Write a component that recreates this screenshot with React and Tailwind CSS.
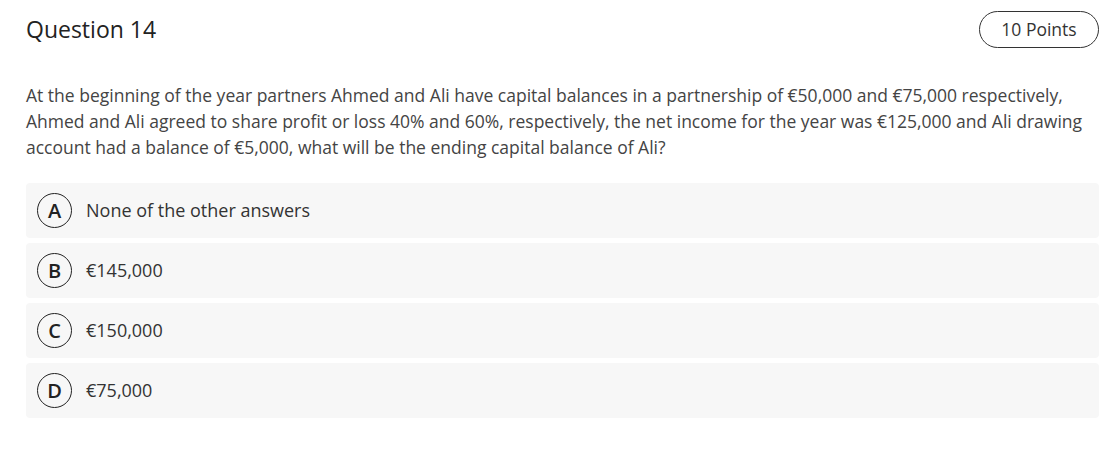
import React from "react";

const answers = [
    { key: "A", text: "None of the other answers" },
    { key: "B", text: "€145,000" },
    { key: "C", text: "€150,000" },
    { key: "D", text: "€75,000" },
];

const Answer = ({ letter, text }) => (
    <div className="h-[55px] rounded bg-[#f7f7f7] flex items-center pl-[11px]">
        <span className="w-[35px] h-[35px] rounded-full border-[1.5px] border-[#222] flex items-center justify-center text-[20px] font-semibold text-[#222] leading-none">
            {letter}
        </span>
        <span className="ml-[14px] text-[18px] text-[#333]">{text}</span>
    </div>
);

const App = () => {
    return (
        <div className="w-[1111px] h-[449px] bg-white pl-[26px] pr-[12px] pt-[11px] font-['Open_Sans',sans-serif]">
            <header className="flex items-center justify-between">
                <h1 className="text-[23px] text-[#222]">Question 14</h1>
                <span className="h-[37px] w-[120px] rounded-full border border-[#333] flex items-center justify-center text-[17.5px] text-[#333]">
                    10 Points
                </span>
            </header>
            <p className="mt-[34px] text-[17.5px] leading-[26px] text-[#444]">
                At the beginning of the year partners Ahmed and Ali have capital balances in a partnership of €50,000 and €75,000 respectively, Ahmed and Ali agreed to share profit or loss 40% and 60%, respectively, the net income for the year was €125,000 and Ali drawing account had a balance of €5,000, what will be the ending capital balance of Ali?
            </p>
            <div className="mt-[23px] flex flex-col gap-[5px]">
                {answers.map(a => <Answer key={a.key} letter={a.key} text={a.text} />)}
            </div>
        </div>
    );
};

export default App;
